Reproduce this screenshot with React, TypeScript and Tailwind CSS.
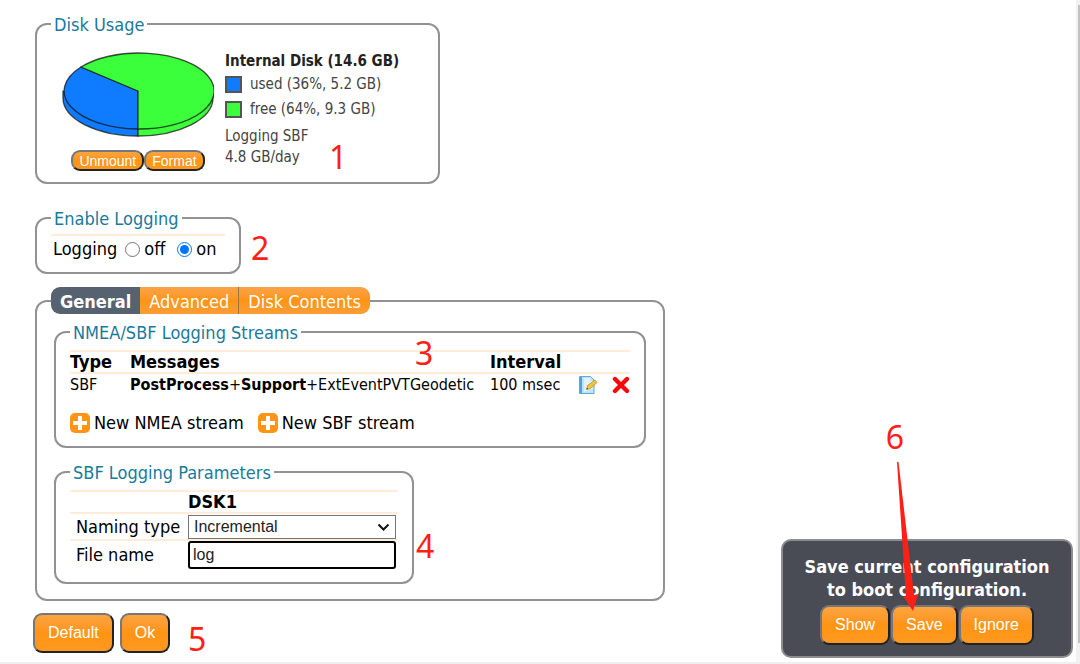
import React, { useState } from 'react';

const tabs = ['General', 'Advanced', 'Disk Contents'];

const streams = [
  { type: 'SBF', messages: ['PostProcess', 'Support'], extra: 'ExtEventPVTGeodetic', interval: '100 msec' },
];

const Panel: React.FC<{ title: string; className?: string; children: React.ReactNode }> = ({ title, className = '', children }) => (
  <fieldset className={`rounded-xl border-2 border-[#929292] px-3.5 ${className}`}>
    <legend className="px-[3px] pt-0.5 leading-6 text-[#197a9c]">{title}</legend>
    {children}
  </fieldset>
);

const OrangeButton: React.FC<{ children: React.ReactNode; small?: boolean }> = ({ children, small }) => (
  <button
    type="button"
    className={`border-2 border-t-[#777] border-l-[#777] border-r-[#222] border-b-[#222] bg-linear-to-b from-[#fba440] via-[#ff9414] to-[#ff9920] text-white font-['Liberation_Sans',sans-serif] ${
      small ? 'h-[21px] rounded-[9px] px-1.5 text-sm leading-4' : 'h-10 rounded-[9px] px-[13px] text-base'
    }`}
  >
    {children}
  </button>
);

const Mark: React.FC<{ n: number; className: string }> = ({ n, className }) => (
  <span className={`absolute text-[32px] leading-8 text-[#ff2015] font-['Noto_Sans',sans-serif] ${className}`}>{n}</span>
);

const DiskPie = () => (
  <svg width="152" height="86" viewBox="0 0 152 86" stroke="#111" strokeWidth="1.3" strokeOpacity="0.75" strokeLinejoin="round">
    <path d="M1 39v7a75 38 0 0 0 75 38v-7z" fill="#0f7bff" />
    <path d="M151 39v7a75 38 0 0 1-75 38v-7z" fill="#3cff3c" />
    <path d="M76 39V77A75 38 0 0 1 19 15z" fill="#0f7bff" />
    <path d="M76 39V77A75 38 0 1 0 19 15z" fill="#3cff3c" />
  </svg>
);

const PlusIcon = () => (
  <svg width="20" height="20" viewBox="0 0 20 20">
    <rect width="20" height="20" rx="5" fill="#ff9416" />
    <path d="M10 3v14M3 10h14" stroke="#fff" strokeWidth="4" />
  </svg>
);

const EditIcon = () => (
  <svg width="20" height="20" viewBox="0 0 20 20">
    <path d="M1.5 1.5h11l3.500 3.500v13.500h-14.500z" fill="#bfe3fa" stroke="#5fa8dc" />
    <path d="M2 2h2v16h-2z" fill="#4da3e0" />
    <path d="M6 3h6v3h3v8l-9 3z" fill="#e0f2fe" />
    <path d="M8.500 14.500l1-4 7.500-5.500 2 2.500-6.500 6z" fill="#f2c53d" stroke="#b8922a" strokeWidth=".8" />
    <path d="M8.500 14.500l.5-1.800 1.300 1.300z" fill="#444" />
  </svg>
);

const DeleteIcon = () => (
  <svg width="18" height="18" viewBox="0 0 18 18">
    <path d="M3 3l12 12M15 3L3 15" stroke="#f80808" strokeWidth="4.400" strokeLinecap="round" />
  </svg>
);

export default function App() {
  const [tab, setTab] = useState('General');
  const [logging, setLogging] = useState('on');

  return (
    <div className="relative min-h-screen overflow-hidden bg-white text-lg leading-6 text-black font-['DejaVu_Sans_Condensed','Open_Sans',sans-serif]">
      <main className="flex flex-col items-start pt-[11px] pl-[35px]">
        {/* Disk usage */}
        <div className="relative">
          <Panel title="Disk Usage" className="h-[173px] w-[405px]">
            <div className="flex gap-[11px] pt-3 pl-[11px]">
              <div className="flex flex-col items-center pt-[3px]">
                <DiskPie />
                <div className="mt-3 flex">
                  <OrangeButton small>Unmount</OrangeButton>
                  <OrangeButton small>Format</OrangeButton>
                </div>
              </div>
              <div className="text-[15px] leading-[21px] text-[#444]">
                <p className="pt-0.5 font-bold text-[#222]">Internal Disk (14.6 GB)</p>
                <p className="flex h-[25px] items-center gap-2">
                  <span className="size-[17px] border-2 border-[#555] bg-[#0f7bff]" />
                  used (36%, 5.2 GB)
                </p>
                <p className="flex h-[25px] items-center gap-2">
                  <span className="size-[17px] border-2 border-[#555] bg-[#3cff3c]" />
                  free (64%, 9.3 GB)
                </p>
                <p className="pt-1">Logging SBF</p>
                <p>4.8 GB/day</p>
              </div>
            </div>
          </Panel>
          <Mark n={1} className="top-[130px] left-[294px]" />
        </div>

        {/* Enable logging */}
        <div className="relative mt-[21px]">
          <Panel title="Enable Logging" className="h-[69px] w-[206px]">
            <div className="mt-[3px] flex h-7 items-center border-t-2 border-[#ffecd9] pl-0.5 whitespace-nowrap">
              <span>Logging</span>
              <label className="ml-2 flex items-center gap-1">
                <input type="radio" name="logging" className="size-[15px]" checked={logging === 'off'} onChange={() => setLogging('off')} />
                off
              </label>
              <label className="ml-3 flex items-center gap-1">
                <input type="radio" name="logging" className="size-[15px]" checked={logging === 'on'} onChange={() => setLogging('on')} />
                on
              </label>
            </div>
          </Panel>
          <Mark n={2} className="top-[27px] left-[216px]" />
        </div>

        {/* Tabs */}
        <fieldset className="relative mt-[13px] h-[314px] w-[630px] rounded-xl border-2 border-[#929292] px-[17px]">
          <legend className="-ml-[3px] flex h-[27px] overflow-hidden rounded-[9px]">
            {tabs.map((name) => (
              <button
                key={name}
                type="button"
                onClick={() => setTab(name)}
                className={`px-[9px] pt-0.5 ${
                  tab === name
                    ? 'bg-[#566270] font-bold text-white'
                    : 'border-r border-[#a0763c] bg-linear-to-b from-[#f8a448] via-[#ff9414] to-[#fb9d36] text-white last:border-r-0'
                }`}
              >
                {name}
              </button>
            ))}
          </legend>

          <Panel title="NMEA/SBF Logging Streams" className="mt-[5px] h-[129px]">
            <table className="mt-[5px] w-full table-fixed text-left">
              <thead>
                <tr className="h-[22px] border-t-2 border-[#ffecd9] leading-5">
                  <th className="w-[60px]">Type</th>
                  <th>Messages</th>
                  <th className="w-[88px]">Interval</th>
                  <th className="w-[52px]"></th>
                </tr>
              </thead>
              <tbody>
                {streams.map((s) => (
                  <tr key={s.extra} className="h-[22px] border-t-2 border-[#ffecd9] text-base leading-5 whitespace-nowrap">
                    <td>{s.type}</td>
                    <td>
                      <b>{s.messages[0]}</b>+<b>{s.messages[1]}</b>+{s.extra}
                    </td>
                    <td>{s.interval}</td>
                    <td>
                      <div className="flex h-[18px] items-center justify-between">
                        <button type="button" aria-label="Edit"><EditIcon /></button>
                        <button type="button" aria-label="Delete"><DeleteIcon /></button>
                      </div>
                    </td>
                  </tr>
                ))}
              </tbody>
            </table>
            <div className="mt-4 flex gap-3.5">
              <button type="button" className="flex items-center gap-1"><PlusIcon />New NMEA stream</button>
              <button type="button" className="flex items-center gap-1"><PlusIcon />New SBF stream</button>
            </div>
          </Panel>
          <Mark n={3} className="top-[23px] left-[378px]" />

          <Panel title="SBF Logging Parameters" className="mt-[11px] h-[125px] w-[360px]">
            <table className="mt-[5px] w-full text-left">
              <thead>
                <tr className="h-[22px] border-t-2 border-[#ffecd9] leading-5">
                  <th className="w-[118px]"></th>
                  <th>DSK1</th>
                </tr>
              </thead>
              <tbody>
                <tr className="h-[27px] border-t-2 border-[#ffecd9]">
                  <td className="pl-1.5"><label htmlFor="naming">Naming type</label></td>
                  <td>
                    <div className="relative w-[208px]">
                      <select id="naming" className="block h-6 w-full appearance-none border border-[#767676] bg-white pl-[5px] text-base leading-5 text-[#222] font-['Liberation_Sans',sans-serif]">
                        <option>Incremental</option>
                      </select>
                      <svg className="pointer-events-none absolute top-2 right-1.5" width="13" height="9" viewBox="0 0 13 9">
                        <path d="M1.500 1.500l5 5 5-5" fill="none" stroke="#111" strokeWidth="2" />
                      </svg>
                    </div>
                  </td>
                </tr>
                <tr className="h-7 border-t-2 border-[#ffecd9]">
                  <td className="pl-1.5"><label htmlFor="file">File name</label></td>
                  <td>
                    <input id="file" type="text" defaultValue="log" className="block h-7 w-[208px] rounded-[3px] border-2 border-black bg-white px-[3px] text-base text-[#222] font-['Liberation_Sans',sans-serif]" />
                  </td>
                </tr>
              </tbody>
            </table>
          </Panel>
          <Mark n={4} className="top-[216px] left-[379px]" />
        </fieldset>

        <div className="relative mt-3 -ml-0.5 flex gap-1.5">
          <OrangeButton>Default</OrangeButton>
          <OrangeButton>Ok</OrangeButton>
          <Mark n={5} className="top-2.5 left-[155px]" />
        </div>
      </main>

      {/* Save prompt */}
      <div className="absolute right-[7px] bottom-1.5 flex h-[119px] w-[292px] flex-col items-center rounded-[10px] border-2 border-[#8d8d8d] bg-[#4a4c55] pt-3.5 text-white">
        <p className="text-center leading-[23px] font-bold whitespace-nowrap">
          Save current configuration
          <br />
          to boot configuration.
        </p>
        <div className="mt-1 flex gap-px">
          <OrangeButton>Show</OrangeButton>
          <OrangeButton>Save</OrangeButton>
          <OrangeButton>Ignore</OrangeButton>
        </div>
      </div>
      <Mark n={6} className="right-[176px] bottom-[211px]" />
      <svg className="pointer-events-none absolute right-[161px] bottom-[52px]" width="24" height="152" viewBox="0 0 24 152">
        <path d="M2 2L3.500 2 19 135 23 134 18 151 8 136 11 137z" fill="#ff2015" />
      </svg>

      {/* Window edges */}
      <div className="absolute right-0 bottom-0 left-0 h-0.5 bg-[#f0f0f0]" />
      <div className="absolute top-0 right-0 bottom-0 w-1 bg-[#f1f1f1] pt-[5px] pl-0.5 pb-[21px]">
        <div className="h-full bg-[#c1c1c1]" />
      </div>
    </div>
  );
}
